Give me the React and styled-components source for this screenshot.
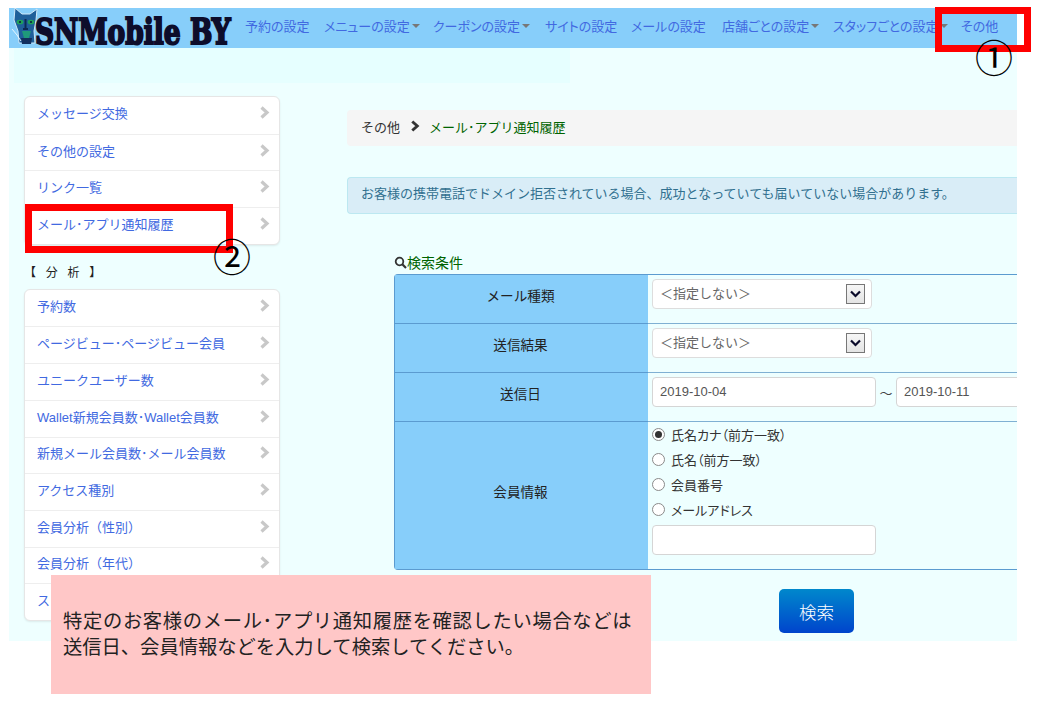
import React from 'react';
import styled, { createGlobalStyle } from 'styled-components';

const jp = `"Liberation Sans", "Noto Sans CJK JP", "Noto Sans", sans-serif`;

const Global = createGlobalStyle`
  html, body { margin: 0; padding: 0; background: #fff; }
  body { font-family: ${jp}; width: 1040px; height: 701px; overflow: hidden; position: relative; }
  * { box-sizing: border-box; }
`;

const Frame = styled.div`
  margin: 8px 0 0 9px;
  width: 1008px;
  height: 633px;
  background: #eeffff;
  overflow: hidden;
  display: flex;
  flex-direction: column;
`;

const Navbar = styled.nav`
  height: 40px;
  flex: none;
  background: #87cefa;
  display: flex;
  align-items: center;
`;

const Brand = styled.div`
  display: flex;
  align-items: flex-start;
  height: 40px;
  width: 236px;
  flex: none;
  padding-left: 2px;
`;

const BrandText = styled.span`
  display: inline-block;
  font-family: "DejaVu Serif", serif;
  font-weight: 700;
  font-size: 36px;
  line-height: 40px;
  color: #0d0d2b;
  -webkit-text-stroke: 2.2px #0d0d2b;
  margin-left: -6px;
  margin-top: 3px;
  white-space: nowrap;
  transform: scaleX(0.735);
  transform-origin: left center;
  text-shadow: 0 0 1px #fff, 0 0 1px #fff;
`;

const NavList = styled.div`
  display: flex;
  align-items: center;
  font-size: 13px;
  font-feature-settings: "palt";
  color: #4169e1;
  white-space: nowrap;
`;

const NavItem = styled.span`
  display: flex;
  align-items: center;
  width: ${p => p.$w}px;
  flex: none;
  margin-top: -5px;
`;

const Caret = styled.i`
  display: inline-block;
  margin-left: 2px;
  border-top: 4px solid #777;
  border-left: 4px solid transparent;
  border-right: 4px solid transparent;
`;

const Band = styled.div`
  height: 35px;
  flex: none;
  margin-left: 5px;
  width: 556px;
  background: #e6ffff;
`;

const Columns = styled.div`
  flex: 1;
  display: flex;
  min-height: 0;
`;

const Sidebar = styled.aside`
  width: 256px;
  flex: none;
  margin-left: 15px;
  padding-top: 13px;
  display: flex;
  flex-direction: column;
`;

const Menu = styled.ul`
  list-style: none;
  margin: 0;
  padding: 0;
  background: #fff;
  border: 1px solid #e6e6e6;
  border-radius: 6px;
  box-shadow: 0 1px 2px rgba(0,0,0,0.08);
`;

const MenuItem = styled.li`
  height: 36.7px;
  padding: 0 9px 5px 12px;
  display: flex;
  align-items: center;
  justify-content: space-between;
  font-size: 13px;
  color: #4169e1;
  white-space: nowrap;
  & + & { border-top: 1px solid #eee; }
`;

const SectionTitle = styled.div`
  font-size: 12px;
  color: #222;
  height: 44px;
  padding: 19px 0 0;
  line-height: 18px;
  letter-spacing: 3.2px;
  white-space: pre;
`;

const Main = styled.main`
  margin-left: 67px;
  width: 670px;
  flex: none;
  padding-top: 27px;
`;

const Crumb = styled.div`
  height: 36px;
  background: #f5f5f5;
  border-radius: 4px 0 0 4px;
  display: flex;
  align-items: center;
  padding: 0 0 4px 14px;
  font-size: 13px;
  color: #333;
`;

const CrumbSep = styled.span`
  display: flex;
  margin: 0 9px 0 10px;
`;

const CrumbLink = styled.span`
  color: #006400;
`;

const Alert = styled.div`
  margin-top: 31px;
  height: 37px;
  background: #d9edf7;
  border: 1px solid #bce8f1;
  border-right: 0;
  border-radius: 4px 0 0 4px;
  color: #31708f;
  font-size: 13px;
  display: flex;
  align-items: center;
  padding: 0 0 6px 13px;
  white-space: nowrap;
`;

const SearchLabel = styled.div`
  margin: 40px 0 0 47px;
  height: 20px;
  display: flex;
  align-items: center;
  padding-bottom: 4px;
  font-size: 14px;
  color: #006400;
`;

const SearchTable = styled.div`
  margin-left: 47px;
  width: 640px;
  display: grid;
  grid-template-columns: 253px 1fr;
  grid-template-rows: 48px 49px 49px 148px;
  border-top: 1px solid #5b9bd0;
  border-left: 1px solid #5b9bd0;
  border-bottom: 1px solid #5b9bd0;
  border-radius: 4px 0 0 4px;
`;

const HeadCell = styled.div`
  background: #87cefa;
  display: flex;
  align-items: center;
  justify-content: center;
  padding: 0 2px 9px 0;
  font-size: 13.6px;
  color: #222;
  ${p => p.$top && 'border-top: 1px solid #5b9bd0;'}
`;

const ValueCell = styled.div`
  padding: 4px 0 0 4px;
  display: flex;
  align-items: flex-start;
  font-size: 13px;
  color: #333;
  ${p => p.$top && 'border-top: 1px solid #7fb0d3;'}
`;

const RadioCell = styled(ValueCell)`
  padding-top: 0;
  font-feature-settings: "palt";
`;

const SelectBox = styled.div`
  width: 220px;
  height: 30px;
  background: #fff;
  border: 1px solid #ddd;
  border-radius: 4px;
  display: flex;
  align-items: center;
  justify-content: space-between;
  padding: 0 6px 0 7px;
  font-size: 13px;
  color: #666;
`;

const SelectLabel = styled.span`
  margin-top: -4px;
`;

const SelectArrow = styled.span`
  width: 19px;
  height: 20px;
  background: linear-gradient(#f6f6f6, #e4e4e4);
  border: 1px solid #777;
  display: flex;
  align-items: center;
  justify-content: center;
`;

const TextField = styled.div`
  width: ${p => p.$w || 224}px;
  height: 30px;
  flex: none;
  background: #fff;
  border: 1px solid #d5d5d5;
  border-radius: 4px;
  display: flex;
  align-items: center;
  padding: 0 0 1px 7px;
  font-size: 13px;
  color: #555;
`;

const MemberField = styled(TextField)`
  margin-top: 3px;
`;

const Tilde = styled.span`
  width: 20px;
  text-align: center;
  flex: none;
  font-size: 13px;
  line-height: 34px;
  color: #444;
`;

const RadioStack = styled.div`
  display: flex;
  flex-direction: column;
`;

const RadioRow = styled.label`
  height: 25px;
  display: flex;
  align-items: center;
  gap: 6px;
  white-space: nowrap;
`;

const Radio = styled.span`
  width: 13px;
  height: 13px;
  border-radius: 50%;
  border: 1px solid #8a8a8a;
  background: #fff;
  display: flex;
  align-items: center;
  justify-content: center;
  &::after {
    content: '';
    width: 7px;
    height: 7px;
    border-radius: 50%;
    background: ${p => (p.$on ? '#333' : 'transparent')};
  }
`;

const ButtonRow = styled.div`
  display: flex;
  margin: 19px 0 0 432px;
`;

const SearchButton = styled.div`
  width: 75px;
  height: 44px;
  border-radius: 5px;
  background: linear-gradient(#0088cc, #0044cc);
  color: #fff;
  font-size: 17.5px;
  font-weight: 300;
  display: flex;
  align-items: center;
  justify-content: center;
`;

const RedBox = styled.div`
  position: absolute;
  left: ${p => p.$x}px;
  top: ${p => p.$y}px;
  width: ${p => p.$w}px;
  height: ${p => p.$h}px;
  border: 7px solid #ff0000;
`;

const Marker = styled.span`
  position: absolute;
  left: ${p => p.$x}px;
  top: ${p => p.$y}px;
  font-family: "Noto Sans CJK JP", sans-serif;
  font-size: 38px;
  line-height: 38px;
  color: #000;
`;

const Note = styled.div`
  position: absolute;
  left: 51px;
  top: 575px;
  width: 600px;
  height: 119px;
  background: #ffc7c7;
  padding: 34px 0 0 12px;
  font-size: 19.3px;
  line-height: 26px;
  color: #222;
  white-space: nowrap;
`;

const NoteLine = styled.div`
  letter-spacing: ${p => p.$spacing || 0}px;
`;

const Chevron = ({ color = '#c8c8c8', size = 11 }) => (
  <svg width={size} height={size + 2} viewBox="0 0 11 13" style={{ flex: 'none' }}>
    <path d="M2.5 1.5 L8 6.5 L2.5 11.5" fill="none" stroke={color} strokeWidth="3.2" />
  </svg>
);

const SearchIcon = () => (
  <svg width="13" height="13" viewBox="0 0 13 13" style={{ flex: 'none' }}>
    <circle cx="5.5" cy="5.5" r="3.8" fill="none" stroke="#333" strokeWidth="1.8" />
    <path d="M8.3 8.3 L12 12" stroke="#333" strokeWidth="2.2" />
  </svg>
);

const ArrowGlyph = () => (
  <svg width="11" height="8" viewBox="0 0 11 8">
    <path d="M1 1.5 L5.5 6 L10 1.5" fill="none" stroke="#0a0a2a" strokeWidth="2.2" />
  </svg>
);

const CatLogo = () => (
  <svg width="30" height="38" viewBox="0 0 30 38" style={{ flex: 'none' }}>
    <path d="M4 0 L11 6 L19 6 L26 1 L25 12 L23 23 L24 35 L8 35 L7 23 L3 12 Z" fill="#1f5f9a" stroke="#cfe8f8" strokeWidth="1" />
    <path d="M11 23 L20 23 L18 30 L13 30 Z" fill="#1f9a7a" />
    <ellipse cx="9" cy="14" rx="3.4" ry="2.3" fill="#1fa25a" />
    <ellipse cx="20" cy="14" rx="3.4" ry="2.3" fill="#1fa25a" />
    <circle cx="9" cy="14" r="1.1" fill="#0d2040" />
    <circle cx="20" cy="14" r="1.1" fill="#0d2040" />
    <path d="M14.5 11 L14.5 21 M12 21 L17 21" stroke="#0d2a55" strokeWidth="2" />
    <path d="M10 30 L21 30 L20 36 L11 36 Z" fill="#12305e" />
    <path d="M1 21 L6 27 L10 33" fill="none" stroke="#e6f6ff" strokeWidth="1" />
  </svg>
);

const navItems = [
  { t: '予約の設定', w: 79 },
  { t: 'メニューの設定', w: 109, c: 1 },
  { t: 'クーポンの設定', w: 112, c: 1 },
  { t: 'サイトの設定', w: 86 },
  { t: 'メールの設定', w: 91 },
  { t: '店舗ごとの設定', w: 111, c: 1 },
  { t: 'スタッフごとの設定', w: 128, c: 1 },
  { t: 'その他', w: 50 },
];

const menuA = ['メッセージ交換', 'その他の設定', 'リンク一覧', 'メール･アプリ通知履歴'];
const menuB = [
  '予約数',
  'ページビュー･ページビュー会員',
  'ユニークユーザー数',
  'Wallet新規会員数･Wallet会員数',
  '新規メール会員数･メール会員数',
  'アクセス種別',
  '会員分析（性別）',
  '会員分析（年代）',
  'スタッフ分析',
];
const radios = ['氏名カナ（前方一致）', '氏名（前方一致）', '会員番号', 'メールアドレス'];

const Select = () => (
  <SelectBox>
    <SelectLabel>＜指定しない＞</SelectLabel>
    <SelectArrow><ArrowGlyph /></SelectArrow>
  </SelectBox>
);

export default function App() {
  return (
    <>
      <Global />
      <Frame>
        <Navbar>
          <Brand>
            <CatLogo />
            <BrandText>SNMobile BY</BrandText>
          </Brand>
          <NavList>
            {navItems.map(n => (
              <NavItem key={n.t} $w={n.w}>
                {n.t}{n.c && <Caret />}
              </NavItem>
            ))}
          </NavList>
        </Navbar>
        <Band />
        <Columns>
          <Sidebar>
            <Menu>
              {menuA.map(m => <MenuItem key={m}>{m}<Chevron /></MenuItem>)}
            </Menu>
            <SectionTitle>【 分 析 】</SectionTitle>
            <Menu>
              {menuB.map(m => <MenuItem key={m}>{m}<Chevron /></MenuItem>)}
            </Menu>
          </Sidebar>
          <Main>
            <Crumb>
              その他
              <CrumbSep><Chevron color="#333" size={10} /></CrumbSep>
              <CrumbLink>メール･アプリ通知履歴</CrumbLink>
            </Crumb>
            <Alert>お客様の携帯電話でドメイン拒否されている場合、成功となっていても届いていない場合があります。</Alert>
            <SearchLabel><SearchIcon />検索条件</SearchLabel>
            <SearchTable>
              <HeadCell>メール種類</HeadCell>
              <ValueCell><Select /></ValueCell>
              <HeadCell $top>送信結果</HeadCell>
              <ValueCell $top><Select /></ValueCell>
              <HeadCell $top>送信日</HeadCell>
              <ValueCell $top>
                <TextField>2019-10-04</TextField>
                <Tilde>～</Tilde>
                <TextField $w={200}>2019-10-11</TextField>
              </ValueCell>
              <HeadCell $top>会員情報</HeadCell>
              <RadioCell $top>
                <RadioStack>
                  {radios.map((r, i) => (
                    <RadioRow key={r}><Radio $on={i === 0} />{r}</RadioRow>
                  ))}
                  <MemberField />
                </RadioStack>
              </RadioCell>
            </SearchTable>
            <ButtonRow><SearchButton>検索</SearchButton></ButtonRow>
          </Main>
        </Columns>
      </Frame>
      <RedBox $x={935} $y={7} $w={96} $h={45} />
      <Marker $x={975} $y={37}>①</Marker>
      <RedBox $x={25} $y={204} $w={208} $h={49} />
      <Marker $x={213} $y={236}>②</Marker>
      <Note>
        <NoteLine $spacing={0.68}>特定のお客様のメール･アプリ通知履歴を確認したい場合などは</NoteLine>
        <NoteLine>送信日、会員情報などを入力して検索してください。</NoteLine>
      </Note>
    </>
  );
}
